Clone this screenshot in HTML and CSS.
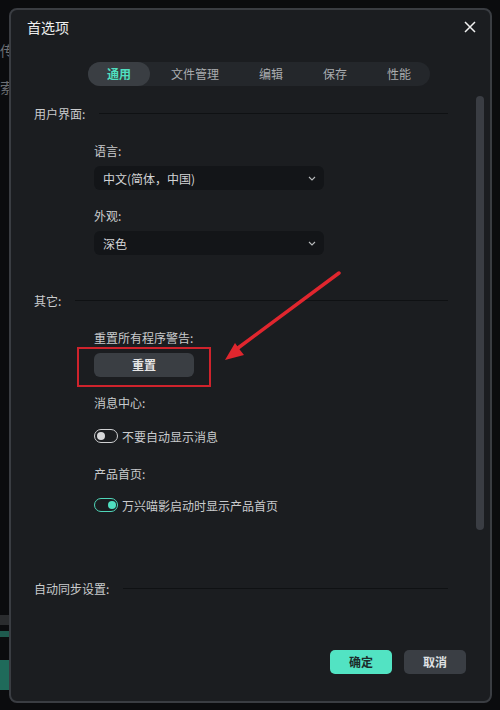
FILE: index.html
```html
<!DOCTYPE html>
<html lang="zh-CN">
<head>
<meta charset="utf-8">
<title>首选项</title>
<link rel="stylesheet" href="styles.css">
</head>
<body>
<div class="backdrop">
  <span class="bg-frag f1">传</span>
  <span class="bg-frag f2">索</span>
  <div class="bg-wave"></div>
</div>
<div class="dialog">
  <div class="header">
    <div class="title">首选项</div>
    <svg class="close" width="12" height="12" viewBox="0 0 12 12"><path d="M1 1 L11 11 M11 1 L1 11" stroke="#f0f0f0" stroke-width="1.5" fill="none"/></svg>
  </div>
  <div class="tabs">
    <div class="tab active">通用</div>
    <div class="tab">文件管理</div>
    <div class="tab">编辑</div>
    <div class="tab">保存</div>
    <div class="tab">性能</div>
  </div>
  <div class="body">
    <div class="main">
      <div class="section">
        <span class="sec-label">用户界面:</span><span class="sec-line"></span>
      </div>
      <div class="sub">
        <div class="label first">语言:</div>
        <div class="select"><span>中文(简体，中国)</span><svg width="8" height="5" viewBox="0 0 8 5"><path d="M1 1 L4 4 L7 1" stroke="#b8babc" stroke-width="1.1" fill="none"/></svg></div>
        <div class="label">外观:</div>
        <div class="select"><span>深色</span><svg width="8" height="5" viewBox="0 0 8 5"><path d="M1 1 L4 4 L7 1" stroke="#b8babc" stroke-width="1.1" fill="none"/></svg></div>
      </div>
      <div class="section sec2">
        <span class="sec-label">其它:</span><span class="sec-line"></span>
      </div>
      <div class="sub">
        <div class="label first">重置所有程序警告:</div>
        <div class="reset-btn">重置</div>
        <div class="label">消息中心:</div>
        <div class="toggle-row t1"><span class="toggle"><span class="knob"></span></span><span>不要自动显示消息</span></div>
        <div class="label l2">产品首页:</div>
        <div class="toggle-row t2"><span class="toggle on"><span class="knob"></span></span><span>万兴喵影启动时显示产品首页</span></div>
      </div>
      <div class="section sec3">
        <span class="sec-label">自动同步设置:</span><span class="sec-line"></span>
      </div>
    </div>
    <div class="scroll"><div class="thumb"></div></div>
  </div>
  <div class="footer">
    <div class="btn primary">确定</div>
    <div class="btn secondary">取消</div>
  </div>
</div>
<div class="mark-box"></div>
<svg class="mark-arrow" width="500" height="710" viewBox="0 0 500 710">
  <path d="M339 273 L238 348" stroke="#e0262e" stroke-width="3.5" stroke-linecap="round" fill="none"/>
  <path d="M225 360 L235 343 L240 350 L244 355 Z" fill="#e0262e"/>
</svg>
</body>
</html>
```
FILE: styles.css
```css
* { box-sizing: border-box; }
html, body { margin: 0; padding: 0; }
body {
  width: 500px;
  height: 710px;
  background: #0b0c0e;
  font-family: "Noto Sans CJK SC", "Noto Sans", sans-serif;
  font-size: 12px;
  color: #c9cbcd;
  position: relative;
  overflow: hidden;
}
.backdrop { position: absolute; left: 0; top: 0; width: 500px; height: 710px; }
.bg-frag { position: absolute; color: #6d7074; font-size: 14px; }
.f1 { left: 0; top: 40px; }
.f2 { left: 0; top: 77px; }
.bg-wave {
  position: absolute; left: 0; top: 615px; width: 10px; height: 75px;
  background: linear-gradient(#2a2c2e 0 10px, #0b0c0e 10px 16px, #1e5a4e 16px 22px, #0b0c0e 22px 45px, #1f6a5a 45px 75px);
}
.dialog {
  position: relative;
  margin: 8px 0 0 9px;
  width: 483px;
  height: 695px;
  background: #1b1d20;
  border: 2px solid #3a3d42;
  border-radius: 8px;
  display: flex;
  flex-direction: column;
}
.header {
  height: 34px;
  display: flex;
  align-items: center;
  justify-content: space-between;
  padding: 0 14px 0 16px;
}
.title { font-size: 14px; color: #eeeeee; }
.close { display: block; }
.tabs {
  margin: 18px 0 0 77px;
  width: max-content;
  height: 24px;
  background: #24272b;
  border-radius: 12px;
  display: flex;
  gap: 2px;
}
.tab {
  flex-shrink: 0;
  white-space: nowrap;
  padding: 0 19px;
  height: 24px;
  line-height: 24px;
  border-radius: 12px;
  color: #a9acaf;
}
.tab.active { background: #3a3e43; color: #4fe0c0; font-weight: 700; }
.body { flex: 1; display: flex; }
.main { flex: 1; padding: 17px 28px 0 23px; }
.section { display: flex; align-items: center; height: 20px; }
.sec-label { color: #c9cbcd; }
.sec-line { flex: 1; height: 1px; background: #0f1113; margin-left: 14px; }
.sec2 { margin-top: 35px; }
.sec3 { margin-top: 63px; }
.sub { margin-left: 60px; }
.label { height: 20px; line-height: 20px; margin-top: 16px; }
.label.first { margin-top: 18px; }
.label.l2 { margin-top: 18px; }
.select {
  margin-top: 5px;
  width: 230px;
  height: 24px;
  background: #131518;
  border-radius: 6px;
  display: flex;
  align-items: center;
  justify-content: space-between;
  padding: 0 8px 0 9px;
  color: #d2d3d5;
}
.select svg { display: block; }
.reset-btn {
  margin-top: 5px;
  width: 100px;
  height: 24px;
  line-height: 24px;
  text-align: center;
  background: #3a3e43;
  border-radius: 6px;
  color: #e6e6e6;
  font-weight: 700;
}
.toggle-row { display: flex; align-items: center; gap: 4px; height: 20px; }
.t1 { margin-top: 13px; }
.t2 { margin-top: 11px; }
.toggle {
  position: relative;
  width: 24px;
  height: 14px;
  border: 1.5px solid #cfd0d2;
  border-radius: 7px;
}
.knob {
  position: absolute;
  top: 1.5px;
  left: 1.5px;
  width: 8px;
  height: 8px;
  border-radius: 50%;
  background: #d6d7d9;
}
.toggle.on { border-color: #4fd6b8; }
.toggle.on .knob { left: auto; right: 1.5px; background: #4fe0c0; }
.scroll { width: 8px; margin-right: 6px; padding-top: 10px; }
.thumb { width: 8px; height: 434px; background: #3a3d43; border-radius: 4px; }
.footer {
  display: flex;
  justify-content: flex-end;
  gap: 12px;
  padding: 0 24px 27px 0;
}
.btn {
  width: 62px;
  height: 24px;
  line-height: 24px;
  text-align: center;
  border-radius: 5px;
  font-weight: 700;
}
.btn.primary { background: #52e3c3; color: #1d2b29; }
.btn.secondary { background: #3a3e44; color: #dfe0e2; }
.mark-box {
  position: absolute;
  left: 77px;
  top: 347px;
  width: 134px;
  height: 40px;
  border: 2px solid #cf232c;
}
.mark-arrow { position: absolute; left: 0; top: 0; pointer-events: none; }
```
